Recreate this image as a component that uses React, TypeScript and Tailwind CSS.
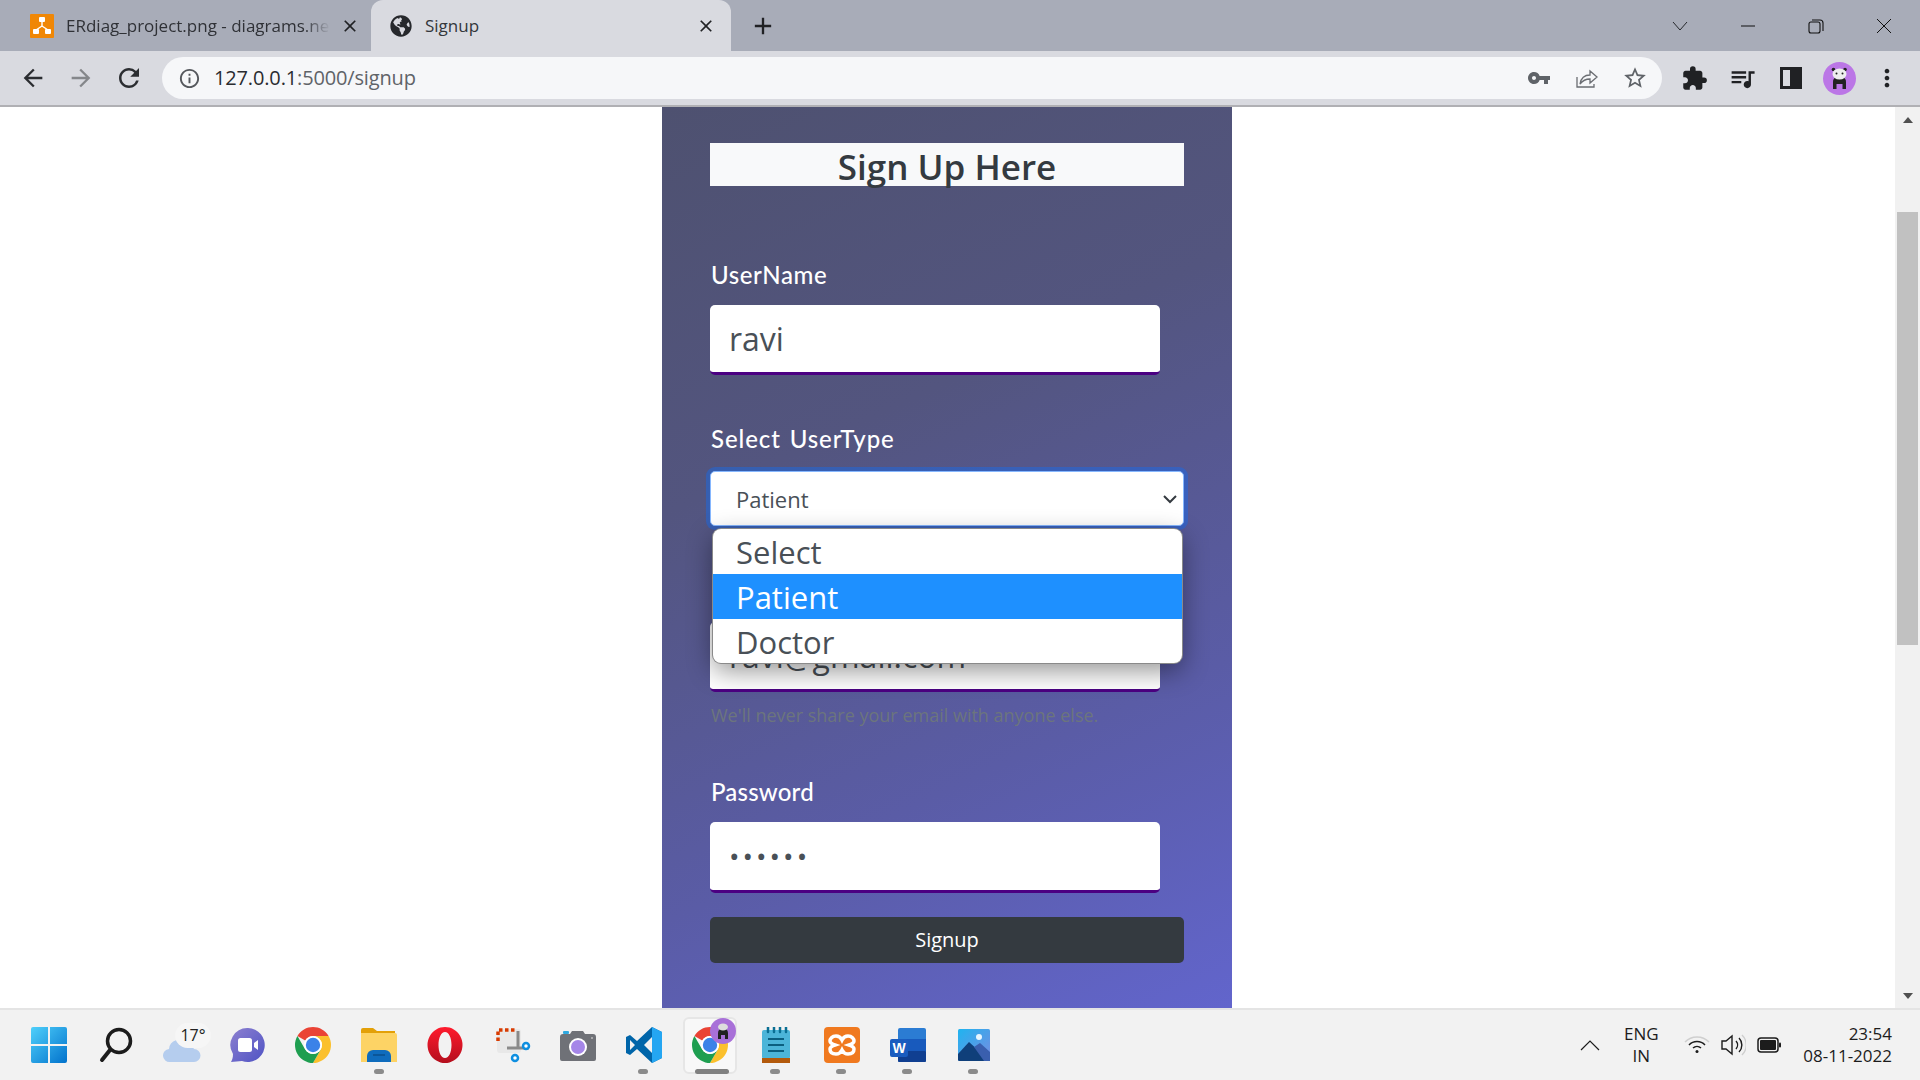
import { FaGlobeAmericas } from "react-icons/fa";
import {
  MdAdd,
  MdArrowBack,
  MdArrowForward,
  MdClose,
  MdExtension,
  MdInfoOutline,
  MdMoreVert,
  MdQueueMusic,
  MdRefresh,
  MdStarBorder,
  MdVpnKey,
} from "react-icons/md";

const SEGOE = "font-['Open_Sans',sans-serif]";
const LABEL = "font-['Lato',sans-serif] font-medium text-[24px] leading-[36px] text-white pl-px";
const INPUT =
  "block w-[450px] h-[70px] bg-white rounded-[5px] border-b-[3px] border-[#4b0082] px-[19px] text-[#495057] outline-none font-['Open_Sans',sans-serif]";

function ChromeLogo({ size = 36 }: { size?: number }) {
  return (
    <svg width={size} height={size} viewBox="4 4 40 40">
      <path fill="#ea4335" d="M6.68 14A20 20 0 0 1 41.32 14H24a10 10 0 0 0-8.66 5z" />
      <path fill="#fbc02d" d="M41.32 14A20 20 0 0 1 24 44L32.66 29A10 10 0 0 0 24 14z" />
      <path fill="#1e9e50" d="M6.68 14L15.34 29A10 10 0 0 0 32.66 29L24 44A20 20 0 0 1 6.68 14z" />
      <circle cx="24" cy="24" r="10" fill="#fff" />
      <circle cx="24" cy="24" r="8" fill="#3b82e8" />
    </svg>
  );
}

function TabStrip() {
  return (
    <div className="h-[51px] bg-[#a8acb8] flex items-end shrink-0">
      <div className="w-[371px] h-full flex items-center pl-[30px] pr-[11px]">
        <svg width="24" height="24" viewBox="0 0 24 24" className="shrink-0">
          <rect width="24" height="24" rx="1" fill="#f08705" />
          <path d="M12 7v5M12 12l-6 4M12 12l6 4" stroke="#fff" strokeWidth="1.4" fill="none" />
          <rect x="9" y="3" width="6" height="5" rx="1" fill="#fff" />
          <rect x="3" y="15" width="6" height="5" rx="1" fill="#fff" />
          <rect x="15" y="15" width="6" height="5" rx="1" fill="#fff" />
        </svg>
        <div
          className={`ml-[12px] w-[264px] overflow-hidden whitespace-nowrap text-[17px] text-[#2f3136] [mask-image:linear-gradient(to_right,black_90%,transparent)] ${SEGOE}`}
        >
          ERdiag_project.png - diagrams.net
        </div>
        <MdClose size={20} className="ml-auto text-[#202124]" />
      </div>
      <div className="w-[360px] h-full bg-[#d9dae0] rounded-t-[12px] flex items-center pl-[19px] pr-[15px]">
        <FaGlobeAmericas size={22} className="text-[#26282c] shrink-0" />
        <span className={`ml-[13px] text-[17px] text-[#33363b] ${SEGOE}`}>Signup</span>
        <MdClose size={20} className="ml-auto text-[#202124]" />
      </div>
      <div className="h-full w-[64px] flex items-center justify-center">
        <MdAdd size={28} className="text-[#202124]" />
      </div>
      <div className="ml-auto h-full flex items-center pr-[26px] gap-[48px]">
        <svg width="20" height="20" viewBox="0 0 20 20" fill="none" stroke="#26282c" strokeWidth="1">
          <path d="M3 6l7 8 7-8" />
        </svg>
        <svg width="20" height="20" viewBox="0 0 20 20" fill="none" stroke="#111" strokeWidth="1">
          <path d="M3 10h14" />
        </svg>
        <svg width="20" height="20" viewBox="0 0 20 20" fill="none" stroke="#111" strokeWidth="1.1">
          <rect x="3" y="6" width="11" height="11" rx="2" />
          <path d="M6 4h8a3 3 0 0 1 3 3v8" />
        </svg>
        <svg width="20" height="20" viewBox="0 0 20 20" fill="none" stroke="#111" strokeWidth="1">
          <path d="M3 3l14 14M17 3L3 17" />
        </svg>
      </div>
    </div>
  );
}

function Toolbar() {
  return (
    <div className="h-[56px] bg-[#d9dae0] border-b-2 border-[#b0b0b4] flex items-center shrink-0 pl-[19px]">
      <MdArrowBack size={28} className="text-[#2b2d31]" />
      <MdArrowForward size={28} className="ml-[20px] text-[#85878b]" />
      <MdRefresh size={30} className="ml-[19px] text-[#2b2d31]" />
      <div className="ml-[18px] w-[1500px] h-[42px] rounded-full bg-[#f6f7f9] flex items-center pl-[16px] pr-[14px]">
        <MdInfoOutline size={23} className="text-[#55585d]" />
        <span className={`ml-[13px] text-[20px] tracking-[-0.15px] text-[#2a2c30] ${SEGOE}`}>
          127.0.0.1<span className="text-[#5f6368]">:5000/signup</span>
        </span>
        <MdVpnKey size={24} className="ml-auto text-[#5f6368]" />
        <svg width="24" height="24" viewBox="0 0 24 24" fill="none" stroke="#6a6d72" strokeWidth="1.3" className="ml-[24px]">
          <path d="M2 11v10h17v-3" />
          <path d="M5 18c1-6 5-9 10-9V5l7 6-7 6v-4c-4 0-7 1-10 5z" />
        </svg>
        <MdStarBorder size={26} className="ml-[23px] text-[#5f6368]" />
      </div>
      <MdExtension size={27} className="ml-[19px] text-[#202124]" />
      <MdQueueMusic size={29} className="ml-[20px] text-[#202124]" />
      <svg width="22" height="22" viewBox="0 0 22 22" className="ml-[23px]">
        <path fillRule="evenodd" fill="#202124" d="M0 0h22v22H0zM3 3v16h7V3z" />
      </svg>
      <svg width="33" height="33" viewBox="0 0 33 33" className="ml-[21px]">
        <circle cx="16.5" cy="16.5" r="16.5" fill="#bb76e6" />
        <path d="M10 27v-7a6.500 6.500 0 0 1 13 0v7h-3.500v-5h-6v5z" fill="#222" />
        <circle cx="10.5" cy="7.500" r="1.800" fill="#222" />
        <circle cx="22" cy="7.500" r="1.800" fill="#222" />
        <ellipse cx="16.5" cy="12" rx="7" ry="5.500" fill="#eee" />
        <circle cx="13.500" cy="11.500" r="1" fill="#222" />
        <circle cx="19.500" cy="11.500" r="1" fill="#222" />
      </svg>
      <MdMoreVert size={28} className="ml-[17px] text-[#202124]" />
    </div>
  );
}

function Dropdown() {
  return (
    <div
      className={`absolute left-[51px] top-[422px] w-[469px] h-[134px] bg-white rounded-[8px] overflow-hidden ring-1 ring-[#8a8a8a] shadow-[0_8px_26px_rgba(0,0,0,0.42)] text-[#495057] text-[31px] leading-[47px] ${SEGOE}`}
    >
      <div className="h-[45px] pl-[23px]">Select</div>
      <div className="h-[45px] pl-[23px] bg-[#1e90ff] text-white">Patient</div>
      <div className="h-[44px] pl-[23px]">Doctor</div>
    </div>
  );
}

function SignupPanel() {
  return (
    <div className="relative ml-[662px] w-[570px] h-full pt-[36px] px-[48px] bg-[linear-gradient(155deg,#4e5170_0%,#53557f_35%,#5a5ca6_70%,#6265cc_100%)]">
      <h1 className={`h-[43px] w-[474px] bg-[#f8f9fa] text-center text-[#343a40] text-[35px] font-semibold leading-[47px] ${SEGOE}`}>
        Sign Up Here
      </h1>
      <div className={`mt-[71px] tracking-[0.6px] ${LABEL}`}>UserName</div>
      <input readOnly defaultValue="ravi" className={`mt-[12px] text-[32px] ${INPUT}`} />
      <div className={`mt-[46px] tracking-[0.9px] [word-spacing:2px] ${LABEL}`}>Select UserType</div>
      <div className="relative mt-[14px]">
        <input
          readOnly
          defaultValue="Patient"
          className={`block w-[474px] h-[55px] bg-white rounded-[5px] border border-[#86b7fe] shadow-[0_0_0_4px_rgba(13,110,253,0.4)] pl-[25px] text-[22px] text-[#495057] outline-none ${SEGOE}`}
        />
        <svg width="16" height="16" viewBox="0 0 16 16" fill="none" stroke="#343a40" strokeWidth="2" className="absolute right-[6px] top-[20px]">
          <path d="M2 5l6 6 6-6" />
        </svg>
      </div>
      <div className={`mt-[46px] ${LABEL}`}>Email</div>
      <input readOnly defaultValue="ravi@gmail.com" className={`mt-[14px] text-[32px] ${INPUT}`} />
      <div className={`mt-[11px] h-[24px] pl-px text-[18px] leading-[24px] text-[#6c757d] ${SEGOE}`}>
        We'll never share your email with anyone else.
      </div>
      <div className={`mt-[47px] tracking-[0.2px] ${LABEL}`}>Password</div>
      <input readOnly type="password" defaultValue="ravi12" className={`mt-[12px] h-[71px] text-[28px] tracking-[3px] ${INPUT}`} />
      <button type="button" className={`mt-[24px] block w-[474px] h-[46px] rounded-[5px] bg-[#343a40] text-white text-[20px] ${SEGOE}`}>
        Signup
      </button>
      <Dropdown />
    </div>
  );
}

function Scrollbar() {
  return (
    <div className="w-[25px] h-full bg-[#f1f1f1] flex flex-col items-center shrink-0">
      <div className="h-[105px] w-full flex justify-center pt-[10px]">
        <div className="w-0 h-0 border-x-[5.500px] border-x-transparent border-b-[6px] border-b-[#505050]" />
      </div>
      <div className="w-[21px] h-[433px] bg-[#c1c1c1]" />
      <div className="mt-auto pb-[9px]">
        <div className="w-0 h-0 border-x-[5.500px] border-x-transparent border-t-[6px] border-t-[#505050]" />
      </div>
    </div>
  );
}

function TaskIcon({ children, running }: { children: React.ReactNode; running?: boolean }) {
  return (
    <div className="relative w-[66px] h-full flex items-center justify-center">
      {children}
      {running ? <div className="absolute bottom-[6px] left-[28px] w-[10px] h-[5px] rounded-full bg-[#8b8b8b]" /> : null}
    </div>
  );
}

function Taskbar() {
  return (
    <div className="h-[72px] bg-[#f2f2f2] border-t-2 border-[#e4e4e4] flex items-stretch shrink-0 pl-[16px]">
      <TaskIcon>
        <svg width="36" height="36" viewBox="0 0 36 36">
          <defs>
            <linearGradient id="w" x1="0" y1="0" x2="1" y2="1">
              <stop offset="0" stopColor="#4fd0fb" />
              <stop offset="1" stopColor="#0272cc" />
            </linearGradient>
          </defs>
          <path fill="url(#w)" d="M0 2a2 2 0 0 1 2-2h15v17H0zM19 0h15a2 2 0 0 1 2 2v15H19zM0 19h17v17H2a2 2 0 0 1-2-2zM19 19h17v15a2 2 0 0 1-2 2H19z" />
        </svg>
      </TaskIcon>
      <TaskIcon>
        <svg width="34" height="36" viewBox="0 0 34 36" fill="none" stroke="#1c1c1c" className="ml-[2px]">
          <circle cx="20" cy="14" r="11.500" strokeWidth="3.500" />
          <path d="M11 23L3 33" strokeWidth="4" strokeLinecap="round" />
        </svg>
      </TaskIcon>
      <TaskIcon>
        <div className="relative w-[50px] h-[40px] ml-[6px]">
          <svg width="38" height="24" viewBox="0 0 38 24" className="absolute left-[4px] top-[14px]">
            <path fill="#b5cdee" d="M7 23a6.500 6.500 0 0 1-1-13A9 9 0 0 1 23 6a7 7 0 0 1 8 4 6.500 6.500 0 0 1 0 13z" />
          </svg>
          <div className="absolute left-[16px] top-[-2px] w-[36px] h-[25px] rounded-full bg-[#f6f6f6] text-center text-[#222] text-[16px] leading-[25px] font-['Open_Sans',sans-serif]">
            17°
          </div>
        </div>
      </TaskIcon>
      <TaskIcon>
        <svg width="36" height="36" viewBox="0 0 36 36" className="ml-[1px]">
          <defs>
            <linearGradient id="c" x1="0" y1="0" x2="1" y2="1">
              <stop offset="0" stopColor="#8d80d0" />
              <stop offset="1" stopColor="#4f53c4" />
            </linearGradient>
          </defs>
          <path fill="url(#c)" d="M18 1a17 17 0 1 1-6 33l-11 1c1-2 2-4 2-8A17 17 0 0 1 18 1z" />
          <rect x="8" y="11" width="14" height="14" rx="2.500" fill="#fff" />
          <path d="M24 16l4-3v10l-4-3z" fill="#fff" />
        </svg>
      </TaskIcon>
      <TaskIcon>
        <ChromeLogo />
      </TaskIcon>
      <TaskIcon running>
        <svg width="36" height="34" viewBox="0 0 36 34">
          <path fill="#e3a008" d="M0 2a2 2 0 0 1 2-2h10l4 3h18v8H0z" />
          <path fill="#fdd365" d="M0 5h34a2 2 0 0 1 2 2v27H0z" />
          <path fill="#0f6cbd" d="M6 34v-6a6 6 0 0 1 6-6h12a6 6 0 0 1 6 6v6z" />
          <path stroke="#0b4f8c" strokeWidth="1.500" d="M12 27h12" />
        </svg>
      </TaskIcon>
      <TaskIcon>
        <svg width="36" height="36" viewBox="0 0 36 36">
          <defs>
            <linearGradient id="o" x1="0" y1="0" x2="0" y2="1">
              <stop offset="0" stopColor="#ff1b2d" />
              <stop offset="1" stopColor="#b40f1d" />
            </linearGradient>
          </defs>
          <path fillRule="evenodd" fill="url(#o)" d="M18 0a17.500 18 0 1 0 .01 0zM18 5c-4 0-6.500 6-6.500 13s2.500 13 6.500 13 6.500-6 6.500-13S22 5 18 5z" />
        </svg>
      </TaskIcon>
      <TaskIcon>
        <svg width="36" height="36" viewBox="0 0 36 36" fill="none" className="ml-[3px]">
          <rect x="2" y="2" width="24" height="24" rx="3" fill="#e8e8e8" />
          <path d="M3 14V3h18" stroke="#d83b01" strokeWidth="3.500" strokeDasharray="3.500 2.500" />
          <path d="M23 4v16M12 21h22" stroke="#8a8a8a" strokeWidth="3" />
          <circle cx="31" cy="19" r="3" stroke="#0f8fe0" strokeWidth="2.500" fill="#fff" />
          <circle cx="20" cy="31" r="3" stroke="#0f8fe0" strokeWidth="2.500" fill="#fff" />
        </svg>
      </TaskIcon>
      <TaskIcon>
        <svg width="36" height="32" viewBox="0 0 36 32" className="ml-[1px]">
          <path fill="#6f7177" d="M0 8a3 3 0 0 1 3-3h7l2-3h11l2 3h8a3 3 0 0 1 3 3v22a2 2 0 0 1-2 2H2a2 2 0 0 1-2-2z" />
          <rect x="3" y="2" width="6" height="3" rx="1" fill="#2ea8e0" />
          <circle cx="18" cy="18" r="9" fill="#fff" />
          <circle cx="18" cy="18" r="7" fill="#a586e8" />
          <circle cx="32" cy="9" r="1" fill="#bbb" />
        </svg>
      </TaskIcon>
      <TaskIcon running>
        <svg width="36" height="36" viewBox="0 0 36 36" className="ml-[1px]">
          <path fill="#0065a9" d="M26 0l10 5v26l-10 5-15-14-7 6-4-2V10l4-2 7 6zM26 10l-8 8 8 8zM4 13v10l5-5z" />
          <path fill="#24a6f2" d="M26 0l10 5v26l-10 5z" />
        </svg>
      </TaskIcon>
      <TaskIcon>
        <div className="absolute left-[7px] top-[7px] w-[54px] h-[57px] rounded-[6px] bg-[#f8f8f8] border-2 border-[#e6e6e6]" />
        <div className="absolute bottom-[6px] left-[19px] w-[34px] h-[5px] rounded-full bg-[#808080]" />
        <div className="relative ml-[1px]">
          <ChromeLogo />
          <svg width="26" height="26" viewBox="0 0 26 26" className="absolute -right-[8px] -top-[9px]">
            <circle cx="13" cy="13" r="13" fill="#a870d8" />
            <path d="M8 21v-6a5 5 0 0 1 10 0v6h-3v-4h-4v4z" fill="#222" />
            <ellipse cx="13" cy="9" rx="5" ry="3.500" fill="#ddd" />
          </svg>
        </div>
      </TaskIcon>
      <TaskIcon running>
        <svg width="30" height="36" viewBox="0 0 30 36" className="ml-[2px]">
          <rect x="1" y="3" width="28" height="29" rx="2" fill="#4cb5d9" />
          <rect x="1" y="31" width="28" height="5" fill="#b35a0c" />
          <path d="M7 0v5M13 0v5M19 0v5M25 0v5" stroke="#0a6f94" strokeWidth="2.500" strokeLinecap="round" />
          <path d="M7 12h16M7 18h16M7 24h16" stroke="#0b5f80" strokeWidth="2" />
        </svg>
      </TaskIcon>
      <TaskIcon running>
        <svg width="36" height="36" viewBox="0 0 36 36" className="ml-[1px]">
          <rect width="36" height="36" rx="4" fill="#f0791f" />
          <path d="M12 9c-4 0-6 3-6 5 0 2 2 3 5 4-3 1-5 2-5 4 0 3 2 5 6 5 3 0 5-2 6-4 1 2 3 4 6 4 4 0 6-2 6-5 0-2-2-3-5-4 3-1 5-2 5-4 0-2-2-5-6-5-3 0-5 2-6 4-1-2-3-4-6-4z" fill="none" stroke="#fff" strokeWidth="3.500" />
        </svg>
      </TaskIcon>
      <TaskIcon running>
        <svg width="36" height="34" viewBox="0 0 36 34" className="ml-[1px]">
          <rect x="8" y="0" width="28" height="34" rx="2" fill="#2b7cd3" />
          <rect x="8" y="11" width="28" height="12" fill="#185abd" />
          <rect x="8" y="23" width="28" height="11" rx="1" fill="#103f91" />
          <rect x="0" y="11" width="18" height="18" rx="2" fill="#1a5cbf" />
          <text x="9" y="25" textAnchor="middle" fontSize="14" fontWeight="700" fill="#fff" fontFamily="Liberation Sans, sans-serif">W</text>
        </svg>
      </TaskIcon>
      <TaskIcon running>
        <svg width="32" height="32" viewBox="0 0 32 32" className="ml-[1px]">
          <defs>
            <linearGradient id="p" x1="0" y1="0" x2="1" y2="1">
              <stop offset="0" stopColor="#1fb4f0" />
              <stop offset="1" stopColor="#7a8be0" />
            </linearGradient>
          </defs>
          <rect width="32" height="32" rx="1.500" fill="url(#p)" />
          <circle cx="21" cy="8" r="3" fill="#e8f6ff" />
          <path d="M0 25l11-12 21 19H1.500A1.500 1.500 0 0 1 0 30.500z" fill="#0f3f7a" />
          <path d="M16 18l6-4 10 9v9H26z" fill="#3a5fae" />
        </svg>
      </TaskIcon>
      <div className="ml-auto flex items-center text-[#1c1c1c] text-[17px] leading-[22px] pr-[28px] font-['Open_Sans',sans-serif]">
        <svg width="20" height="12" viewBox="0 0 20 12" fill="none" stroke="#1c1c1c" strokeWidth="1.200">
          <path d="M1 11L10 2l9 9" />
        </svg>
        <div className="ml-[11px] w-[60px] text-center">
          <div>ENG</div>
          <div>IN</div>
        </div>
        <svg width="26" height="22" viewBox="0 0 26 22" fill="none" stroke="#1c1c1c" strokeWidth="1.500" className="ml-[13px]">
          <path d="M1 8a17 17 0 0 1 24 0" stroke="#cfcfcf" />
          <path d="M5 11a11 11 0 0 1 16 0M9 14a6 6 0 0 1 8 0" />
          <circle cx="13" cy="17.500" r="1.500" fill="#1c1c1c" stroke="none" />
        </svg>
        <svg width="26" height="24" viewBox="0 0 26 24" fill="none" stroke="#1c1c1c" strokeWidth="1.400" className="ml-[10px]">
          <path d="M2 8h4l6-5v18l-6-5H2z" />
          <path d="M16 8a6 6 0 0 1 0 8M19 5a10 10 0 0 1 0 14" />
          <path d="M22 2a14 14 0 0 1 0 20" stroke="#cfcfcf" />
        </svg>
        <svg width="24" height="16" viewBox="0 0 24 16" className="ml-[11px]">
          <rect x="1" y="1" width="20" height="14" rx="3" fill="none" stroke="#1c1c1c" strokeWidth="1.500" />
          <rect x="3" y="3" width="16" height="10" rx="1" fill="#1c1c1c" />
          <rect x="22" y="5.500" width="2" height="5" rx="1" fill="#1c1c1c" />
        </svg>
        <div className="ml-[22px] text-right">
          <div>23:54</div>
          <div>08-11-2022</div>
        </div>
      </div>
    </div>
  );
}

export default function App() {
  return (
    <div className="w-[1920px] h-[1080px] flex flex-col overflow-hidden bg-white">
      <TabStrip />
      <Toolbar />
      <div className="h-[901px] flex shrink-0">
        <div className="flex-1 min-w-0">
          <SignupPanel />
        </div>
        <Scrollbar />
      </div>
      <Taskbar />
    </div>
  );
}
